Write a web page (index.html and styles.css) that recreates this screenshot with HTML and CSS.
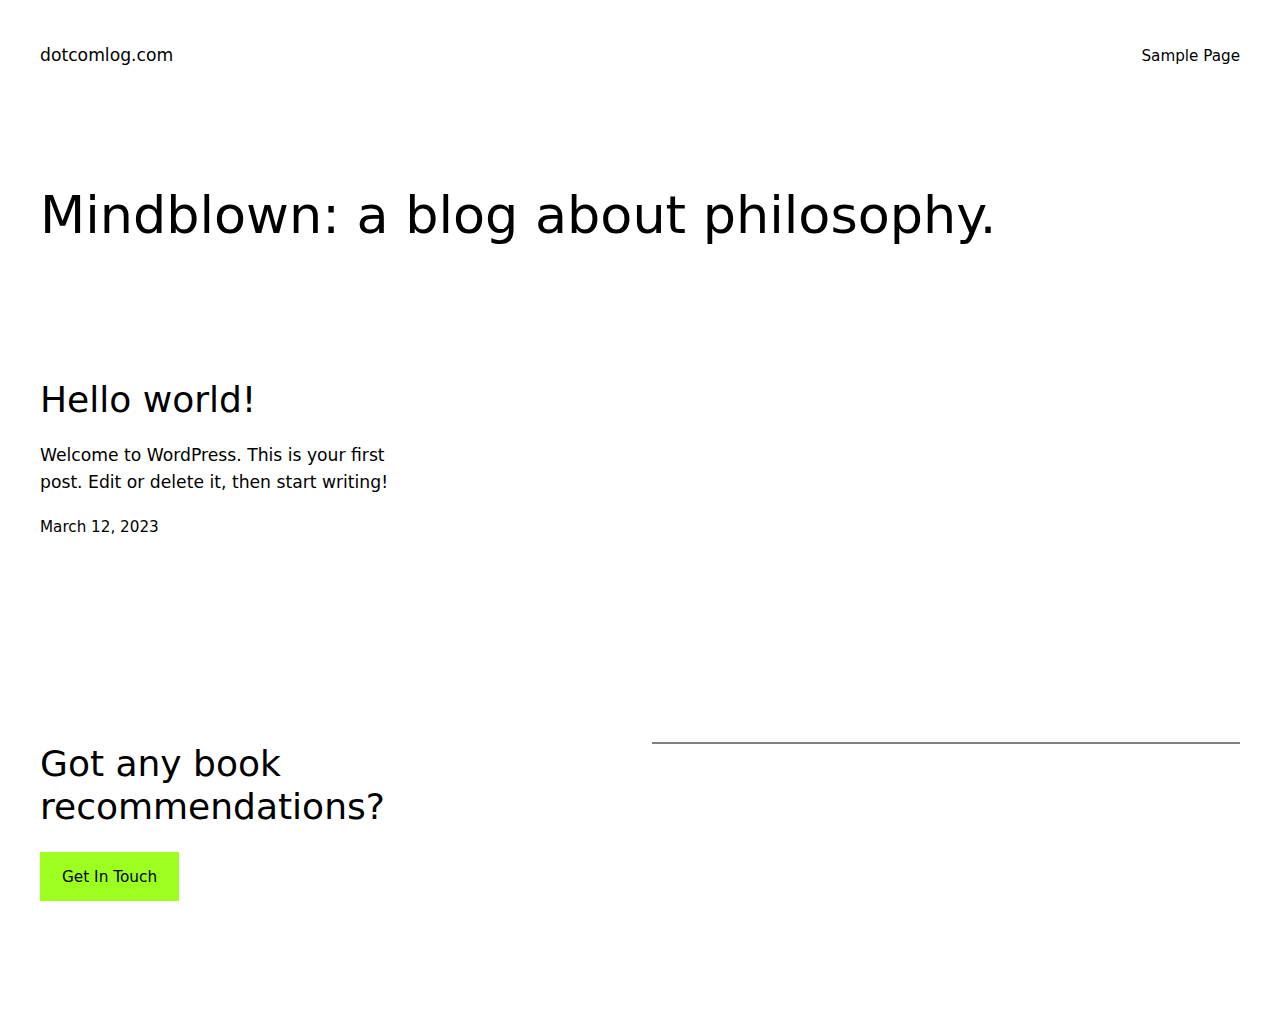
FILE: index.html
```html
<!DOCTYPE html>
<html lang="en">
<head>
<meta charset="utf-8">
<title>dotcomlog.com</title>
<link rel="stylesheet" href="styles.css">
</head>
<body>
<header class="site-header">
  <a class="site-title" href="#">dotcomlog.com</a>
  <nav class="site-nav"><a href="#">Sample Page</a></nav>
</header>
<main class="site-main">
  <h1 class="hero-title">Mindblown: a blog about philosophy.</h1>
  <section class="post-grid">
    <article class="post">
      <h2 class="post-title"><a href="#">Hello world!</a></h2>
      <p class="post-excerpt">Welcome to WordPress. This is your first post. Edit or delete it, then start writing!</p>
      <div class="post-date">March 12, 2023</div>
    </article>
    <div></div>
    <div></div>
  </section>
  <section class="cta">
    <div class="cta-col">
      <h2 class="cta-title">Got any book recommendations?</h2>
      <a class="cta-button" href="#">Get In Touch</a>
    </div>
    <div class="cta-col">
      <hr class="cta-sep">
    </div>
  </section>
</main>
</body>
</html>
```
FILE: styles.css
```css
html, body {
  margin: 0;
  padding: 0;
  background: #ffffff;
  color: #000000;
  font-family: "DejaVu Sans", sans-serif;
}
a {
  color: inherit;
  text-decoration: none;
}
.site-header {
  display: flex;
  justify-content: space-between;
  align-items: center;
  padding: 42px 40px 0;
}
.site-title {
  font-size: 17.2px;
  line-height: 1.6;
}
.site-nav {
  font-size: 15.2px;
  line-height: 1.6;
}
.site-main {
  padding: 0 40px;
}
.hero-title {
  font-weight: 400;
  font-size: 52.4px;
  line-height: 1.2;
  margin: 114px 0 0;
}
.post-grid {
  display: grid;
  grid-template-columns: repeat(3, 1fr);
  gap: 24px;
  margin-top: 132px;
}
.post-title {
  font-weight: 400;
  font-size: 36px;
  line-height: 1.2;
  margin: 0;
}
.post-excerpt {
  font-size: 17.2px;
  line-height: 27px;
  margin: 20px 0 0;
}
.post-date {
  font-size: 15.2px;
  line-height: 1.6;
  margin-top: 19px;
}
.cta {
  display: grid;
  grid-template-columns: 1fr 1fr;
  gap: 24px;
  margin-top: 203px;
}
.cta-title {
  font-weight: 400;
  font-size: 36px;
  line-height: 1.2;
  margin: 0;
  max-width: 420px;
}
.cta-button {
  display: inline-block;
  margin-top: 24px;
  background: #9dff20;
  color: #000;
  font-size: 15.3px;
  line-height: 27px;
  padding: 12px 22px 10px;
}
.cta-sep {
  border: 0;
  border-top: 2px solid #808080;
  margin: 0;
}
```
